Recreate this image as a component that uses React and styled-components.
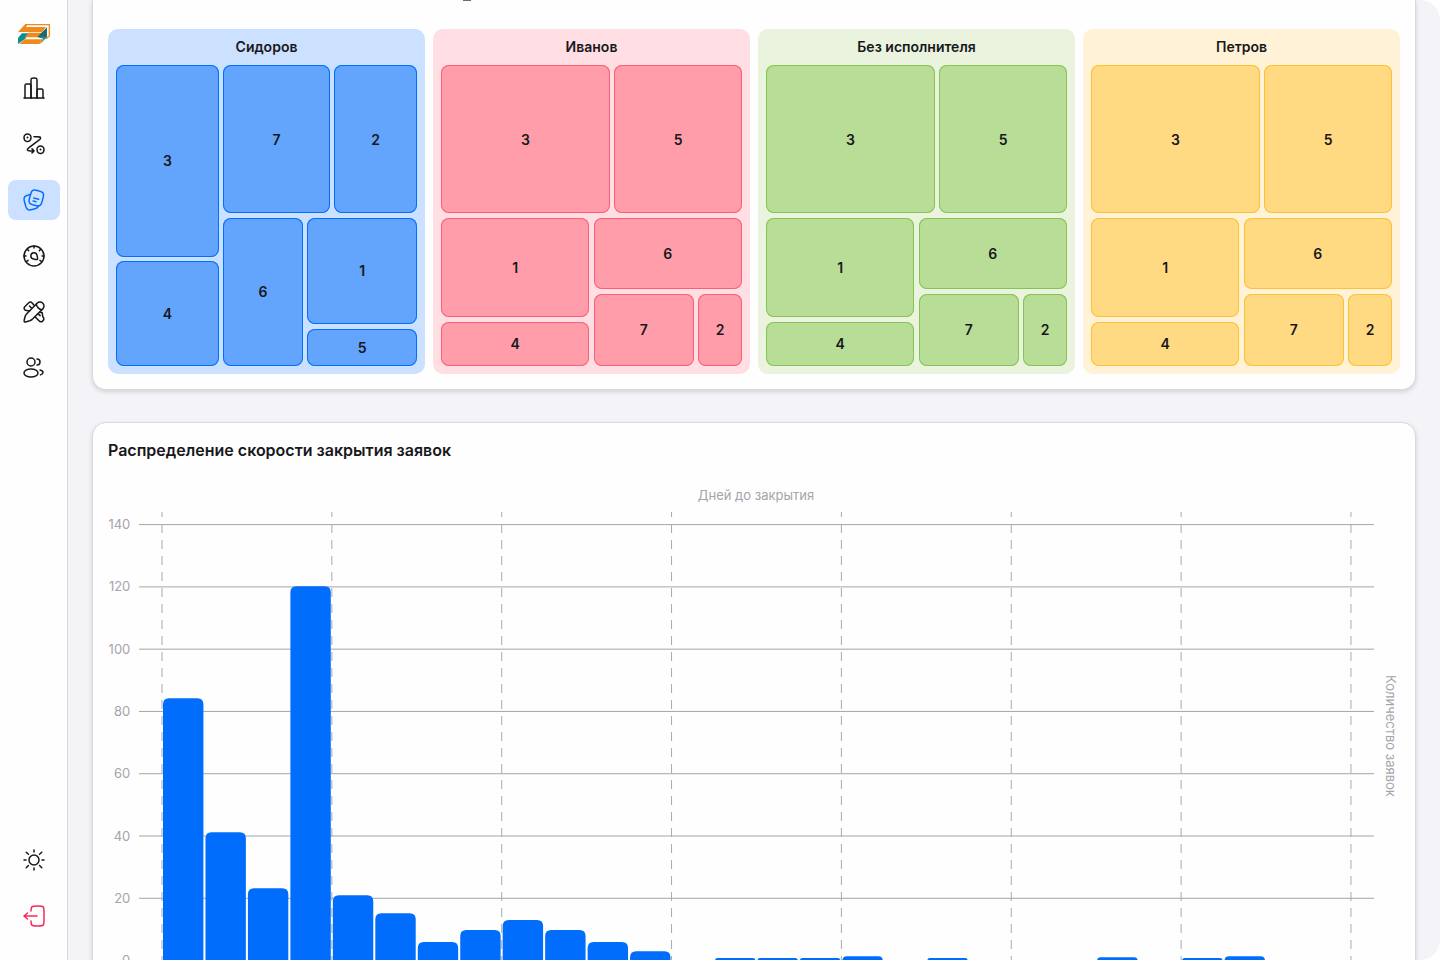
import styled, { createGlobalStyle } from 'styled-components';

const GlobalStyle = createGlobalStyle`
  * {
    box-sizing: border-box;
  }

  body {
    margin: 0;
    overflow: hidden;
    background: #fefefe;
    color: #18181b;
    font-family: Inter, 'Liberation Sans', sans-serif;
  }
`;

const Layout = styled.div`
  display: flex;
  height: 960px;
`;

const Sidebar = styled.aside`
  display: flex;
  flex-direction: column;
  align-items: center;
  width: 68px;
  padding: 24px 0;
  border-right: 1px solid #d9d8de;
  background: #fefefe;
`;

const Nav = styled.nav`
  display: flex;
  flex: 1;
  flex-direction: column;
  gap: 16px;
  margin-top: 24px;
`;

const Footer = styled.div`
  display: flex;
  flex-direction: column;
  gap: 16px;
`;

const NavButton = styled.button`
  display: flex;
  align-items: center;
  justify-content: center;
  width: 52px;
  height: 40px;
  padding: 0;
  border: 0;
  border-radius: 8px;
  background: ${({ $active }) => ($active ? '#cce0ff' : 'transparent')};
  color: ${({ $active, $danger }) =>
    $active ? '#006fff' : $danger ? '#f8285a' : '#18181b'};
`;

const Main = styled.main`
  display: flex;
  flex: 1;
  flex-direction: column;
  gap: 32px;
  min-width: 0;
  overflow: hidden;
  padding: 0 24px;
  border-radius: 0 20px 20px 0;
  background: #f4f3f8;
`;

const Card = styled.section`
  flex: none;
  padding: 15px 15px 16px;
  border: 1px solid #dad9df;
  border-radius: 14px;
  background: #fefefe;
  box-shadow: 0 2px 4px rgba(40, 38, 50, 0.16);
`;

const TreemapCard = styled(Card)`
  height: 390px;
  padding: 0 15px 15px;
  border-top: 0;
  border-radius: 0 0 14px 14px;
`;

const CutHeading = styled.div`
  height: 29px;
  padding-left: 355px;

  &::before {
    content: '';
    display: block;
    width: 8px;
    height: 1px;
    background: #6c6c6f;
  }
`;

const Groups = styled.div`
  display: grid;
  grid-template-columns: repeat(4, 317px);
  gap: 8px;
`;

const Group = styled.div`
  height: 345px;
  padding: 0 8px 8px;
  border-radius: 10px;
  background: ${({ $color }) => $color};
`;

const GroupTitle = styled.h3`
  margin: 0;
  height: 36px;
  font-size: 14px;
  font-weight: 600;
  line-height: 36px;
  text-align: center;
`;

const Split = styled.div`
  display: flex;
  flex: ${({ $size }) => $size} 1 0;
  flex-direction: ${({ $dir }) => $dir};
  gap: 4.2px;
  min-width: 0;
  min-height: 0;
`;

const Treemap = styled(Split)`
  height: 301px;
`;

const Cell = styled.div`
  display: flex;
  flex: ${({ $size }) => $size} 1 0;
  align-items: center;
  justify-content: center;
  min-width: 0;
  min-height: 0;
  border-radius: 8px;
  background: ${({ $fill }) => $fill};
  box-shadow: inset 0 0 0 1px ${({ $border }) => $border};
  font-size: 14px;
  font-weight: 600;
`;

const ChartCard = styled(Card)`
  height: 700px;
`;

const ChartTitle = styled.h2`
  margin: 0;
  font-size: 16px;
  font-weight: 600;
  line-height: 24px;
`;

const AxisTitle = styled.div`
  margin-top: 24px;
  height: 18px;
  padding-left: 4px;
  color: #a5a4ab;
  font-size: 13px;
  line-height: 18px;
  text-align: center;
`;

const ChartRow = styled.div`
  display: flex;
  margin-top: 8px;
`;

const Chart = styled.svg`
  display: block;
  flex: none;
  width: 1267px;
  height: 480px;
`;

const TickLabel = styled.text`
  fill: #a5a4ab;
  font-size: 13px;
  font-weight: 400;
  text-anchor: end;
`;

const SideTitle = styled.div`
  margin-top: 163px;
  margin-left: 7px;
  color: #a5a4ab;
  font-size: 13px;
  line-height: 18px;
  writing-mode: vertical-rl;
`;

const icons = {
  chart: (
    <>
      <path d="M22 22H2" />
      <path d="M21 22V14.5C21 13.67 20.33 13 19.5 13H16.5C15.67 13 15 13.67 15 14.5V22" />
      <path d="M15 22V5C15 3.59 15 2.88 14.56 2.44C14.12 2 13.41 2 12 2C10.59 2 9.88 2 9.44 2.44C9 2.88 9 3.59 9 5V22" />
      <path d="M9 22V9.5C9 8.67 8.33 8 7.5 8H4.5C3.67 8 3 8.67 3 9.5V22" />
    </>
  ),
  route: (
    <>
      <path d="M2 5.4C2 3.5 3.57 2 5.5 2S9 3.5 9 5.4C9 7.2 8 8.8 6.4 9.4a2.4 2.4 0 0 1-1.8 0C3 8.8 2 7.2 2 5.4Z" />
      <path d="M15 17.4c0-1.9 1.57-3.4 3.5-3.4s3.5 1.5 3.5 3.4c0 1.8-1 3.4-2.6 4a2.4 2.4 0 0 1-1.8 0c-1.6-.6-2.6-2.2-2.6-4Z" />
      <path d="M12 4.800h3.300c1.900 0 3 0 3.300.9.300.9-.5 1.600-2 2.700L7.300 15.300c-1.500 1.100-2.300 1.800-2 2.700.3.900 1.400.9 3.300.9H12m0 0-2-2m2 2-2 2" />
      <path d="M5.500 5.500v.01M18.500 17.500v.01" strokeWidth="2" />
    </>
  ),
  notes: (
    <>
      <path d="M20.312 12.647L20.829 10.715C21.434 8.46 21.736 7.333 21.508 6.357C21.329 5.587 20.924 4.887 20.347 4.346C19.616 3.661 18.488 3.359 16.233 2.755C13.978 2.15 12.85 1.848 11.875 2.076C11.104 2.255 10.404 2.659 9.864 3.237C9.277 3.863 8.971 4.78 8.516 6.446L7.755 9.283C7.15 11.538 6.848 12.665 7.076 13.641C7.255 14.412 7.659 15.111 8.237 15.652C8.968 16.337 10.096 16.639 12.351 17.244C14.383 17.788 15.5 18.087 16.415 17.974C17.48 17.743 18.18 17.339 18.72 16.761C19.405 16.03 19.707 14.902 20.312 12.647Z" />
      <path d="M16.415 17.974C16.207 18.613 15.84 19.19 15.347 19.652C14.616 20.337 13.488 20.639 11.233 21.243C8.978 21.847 7.85 22.15 6.875 21.922C6.104 21.742 5.404 21.338 4.864 20.761C4.179 20.03 3.876 18.902 3.272 16.647L2.755 14.715C2.15 12.46 1.848 11.333 2.076 10.357C2.255 9.586 2.659 8.886 3.237 8.346C3.968 7.661 5.096 7.359 7.351 6.754L8.516 6.445" />
      <path d="M11.777 10L16.607 11.294M11 12.898L13.898 13.674" />
    </>
  ),
  gauge: (
    <>
      <circle cx="12" cy="12" r="10" />
      <path d="M15.3 15.4c.5-.5.3-1.4.1-2.300L15 11.300A3.100 3.100 0 1 0 11.400 15l2.500.5c.5.1 1.100.2 1.400-.1Z" />
      <path d="M12 2v2M5.500 5.500l1.100 1.100M18.500 5.500l-1.100 1.100M2 12h2M20 12h2M4.600 17.300l1.500-1M19.400 17.300l-1.500-1" />
    </>
  ),
  pencil: (
    <>
      <path d="M20.800 3.200a4 4 0 0 0-5.700 0L5.300 13.200c-.7.7-1.100 1.100-1.300 1.500-.3.500-.6 1-.8 1.600L2.100 20.500c-.3 1 .4 1.700 1.400 1.400l4.200-1.100c.6-.2 1.100-.5 1.600-.8.400-.3.8-.7 1.500-1.300l10-9.800a4 4 0 0 0 0-5.700Z" />
      <path d="M14.300 4.100s.1 2 1.900 3.800 3.700 1.900 3.700 1.900" />
      <path d="M7.500 11 3.500 10.300C1.700 8.800 1.700 7.800 3 6.500l3.500-3.500c1.300-1.300 2.500-1.300 3.700 0L12 5.200M7.500 6 9.300 7.800" />
      <path d="m13 16.800 4 4c1.300 1.400 2.500 1.400 3.700.1 1.600-1.500 1.600-2.600.1-4L20.200 12.800 18 12.300M16.200 13.700l1.900 1.900" />
    </>
  ),
  users: (
    <>
      <circle cx="9" cy="6" r="4" />
      <path d="M15 9C16.657 9 18 7.657 18 6C18 4.343 16.657 3 15 3" />
      <ellipse cx="9" cy="17" rx="7" ry="4" />
      <path d="M18 14C19.754 14.385 21 15.359 21 16.5C21 17.529 19.986 18.423 18.5 18.87" />
    </>
  ),
  sun: (
    <>
      <circle cx="12" cy="12" r="5" />
      <path d="M12 2v2M12 20v2M4 12H2M22 12h-2M19.778 4.223l-2.222 2.032M4.222 4.223l2.222 2.032M6.444 17.556l-2.222 2.222M19.778 19.777l-2.222-2.222" />
    </>
  ),
  logout: (
    <>
      <path d="M9.002 7C9.014 4.825 9.111 3.647 9.879 2.879C10.758 2 12.172 2 15 2H16C18.829 2 20.243 2 21.122 2.879C22 3.757 22 5.172 22 8V16C22 18.828 22 20.243 21.122 21.121C20.243 22 18.829 22 16 22H15C12.172 22 10.758 22 9.879 21.121C9.111 20.353 9.014 19.175 9.002 17" />
      <path d="M15 12H2M2 12L5.500 9M2 12L5.500 15" />
    </>
  ),
};

function Icon({ name }) {
  return (
    <svg
      width="24"
      height="24"
      viewBox="0 0 24 24"
      fill="none"
      stroke="currentColor"
      strokeWidth="1.5"
      strokeLinecap="round"
      strokeLinejoin="round"
    >
      {icons[name]}
    </svg>
  );
}

function Logo() {
  return (
    <svg width="32" height="20" viewBox="0 0 96 60">
      <path d="M24 2H94V36L84 44" fill="none" stroke="#f08a1d" strokeWidth="4" />
      <path d="M22 0H30L24 9H84L72 24H0Z" fill="#f08a1d" />
      <path d="M12 28H32L22 44 0 60V42Z" fill="#0d8f8f" />
      <path d="M32 26H72L58 40H20Z" fill="#f08a1d" />
      <path d="M87 10V40L66 60 76 44 58 40Z" fill="#168f91" />
      <path d="M86 12V38L58 38Z" fill="#28636b" />
      <path d="M20 46H78L64 60H4Z" fill="#f08a1d" />
    </svg>
  );
}

const navItems = ['chart', 'route', 'notes', 'gauge', 'pencil', 'users'];

// Sizes are relative to the neighbours inside the same split
const defaultTree = {
  dir: 'column',
  items: [
    {
      size: 148.5,
      dir: 'row',
      items: [
        { size: 169, label: 3 },
        { size: 128, label: 5 },
      ],
    },
    {
      size: 148.5,
      dir: 'row',
      items: [
        {
          size: 148.5,
          dir: 'column',
          items: [
            { size: 100, label: 1 },
            { size: 44.4, label: 4 },
          ],
        },
        {
          size: 148.5,
          dir: 'column',
          items: [
            { size: 71.8, label: 6 },
            {
              size: 72.4,
              dir: 'row',
              items: [
                { size: 100.3, label: 7 },
                { size: 44, label: 2 },
              ],
            },
          ],
        },
      ],
    },
  ],
};

const sidorovTree = {
  dir: 'row',
  items: [
    {
      size: 103,
      dir: 'column',
      items: [
        { size: 192, label: 3 },
        { size: 105, label: 4 },
      ],
    },
    {
      size: 194,
      dir: 'column',
      items: [
        {
          size: 148.5,
          dir: 'row',
          items: [
            { size: 107, label: 7 },
            { size: 83, label: 2 },
          ],
        },
        {
          size: 148.5,
          dir: 'row',
          items: [
            { size: 80, label: 6 },
            {
              size: 110,
              dir: 'column',
              items: [
                { size: 107, label: 1 },
                { size: 37.5, label: 5 },
              ],
            },
          ],
        },
      ],
    },
  ],
};

const groups = [
  { name: 'Сидоров', bg: '#cce0ff', fill: '#63a4fd', border: '#006fff', tree: sidorovTree },
  { name: 'Иванов', bg: '#ffdee4', fill: '#ff9eaa', border: '#ff5d74', tree: defaultTree },
  { name: 'Без исполнителя', bg: '#e9f3dd', fill: '#b8dd97', border: '#84c551', tree: defaultTree },
  { name: 'Петров', bg: '#fff2d6', fill: '#ffda83', border: '#fdc233', tree: defaultTree },
];

function Node({ node, group }) {
  if (!node.items) {
    return (
      <Cell $size={node.size} $fill={group.fill} $border={group.border}>
        {node.label}
      </Cell>
    );
  }

  return (
    <Split $size={node.size} $dir={node.dir}>
      {node.items.map((item, index) => (
        <Node key={index} node={item} group={group} />
      ))}
    </Split>
  );
}

const STEP_Y = 62.28;
const STEP_X = 169.85;
const TOP = 12.6;
const ZERO = TOP + STEP_Y * 7;
const LEFT = 54;

const ticks = [140, 120, 100, 80, 60, 40, 20, 0];
const values = [
  84.2, 41.2, 23.2, 120.2, 21, 15.2, 6, 9.8, 13, 9.8, 6, 3, 0, 0.8, 0.8, 0.8,
  1.4, 0, 0.8, 0, 0, 0, 1.1, 0, 0.8, 1.4, 0, 0,
];

function barPath(index, value) {
  const x = LEFT + 1 + (index * STEP_X) / 4;
  const y = ZERO - (value * STEP_Y) / 20;
  const w = 40.4;
  const r = Math.min(6, ZERO - y);
  return `M${x} ${ZERO}V${y + r}q0 ${-r} ${r} ${-r}H${x + w - r}q${r} 0 ${r} ${r}V${ZERO}Z`;
}

function Histogram() {
  return (
    <Chart>
      {ticks.map((tick, index) => {
        const y = TOP + index * STEP_Y;
        return (
          <g key={tick}>
            <TickLabel x="22.3" y={y + 4.6}>
              {tick}
            </TickLabel>
            <path d={`M31 ${y}H1266`} stroke="#a5a4a9" />
          </g>
        );
      })}
      {Array.from({ length: 8 }, (_, index) => (
        <path
          key={index}
          d={`M${LEFT + index * STEP_X} 0V${ZERO}`}
          stroke="#aaa9ad"
          strokeDasharray="9 7"
          strokeDashoffset="4"
        />
      ))}
      {values.map((value, index) =>
        value > 0 ? (
          <path key={index} d={barPath(index, value)} fill="#006dfc" />
        ) : null,
      )}
    </Chart>
  );
}

export default function App() {
  return (
    <>
      <GlobalStyle />
      <Layout>
        <Sidebar>
          <Logo />
          <Nav>
            {navItems.map((name) => (
              <NavButton key={name} $active={name === 'notes'}>
                <Icon name={name} />
              </NavButton>
            ))}
          </Nav>
          <Footer>
            <NavButton>
              <Icon name="sun" />
            </NavButton>
            <NavButton $danger>
              <Icon name="logout" />
            </NavButton>
          </Footer>
        </Sidebar>
        <Main>
          <TreemapCard>
            <CutHeading />
            <Groups>
              {groups.map((group) => (
                <Group key={group.name} $color={group.bg}>
                  <GroupTitle>{group.name}</GroupTitle>
                  <Treemap $dir={group.tree.dir}>
                    {group.tree.items.map((item, index) => (
                      <Node key={index} node={item} group={group} />
                    ))}
                  </Treemap>
                </Group>
              ))}
            </Groups>
          </TreemapCard>
          <ChartCard>
            <ChartTitle>Распределение скорости закрытия заявок</ChartTitle>
            <AxisTitle>Дней до закрытия</AxisTitle>
            <ChartRow>
              <Histogram />
              <SideTitle>Количество заявок</SideTitle>
            </ChartRow>
          </ChartCard>
        </Main>
      </Layout>
    </>
  );
}
